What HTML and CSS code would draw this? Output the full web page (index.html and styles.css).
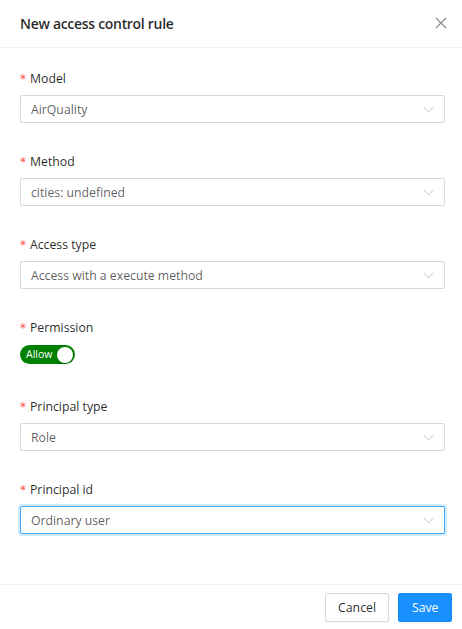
FILE: index.html
```html
<!DOCTYPE html>
<html>
<head>
<meta charset="utf-8">
<link rel="stylesheet" href="styles.css">
</head>
<body>
<div class="modal">
  <div class="header">
    <div class="title">New access control rule</div>
    <svg class="close" width="12" height="12" viewBox="0 0 12 12"><path d="M1 1L11 11M11 1L1 11" stroke="#8c8c8c" stroke-width="1.2" fill="none"/></svg>
  </div>
  <div class="body">
    <div class="item">
      <div class="label"><span class="req">*</span>Model</div>
      <div class="select"><span>AirQuality</span><svg class="arrow" width="11" height="7" viewBox="0 0 11 7"><path d="M0.5 0.8L5.5 5.8L10.5 0.8" stroke="#bfbfbf" stroke-width="1" fill="none"/></svg></div>
    </div>
    <div class="item">
      <div class="label"><span class="req">*</span>Method</div>
      <div class="select"><span>cities: undefined</span><svg class="arrow" width="11" height="7" viewBox="0 0 11 7"><path d="M0.5 0.8L5.5 5.8L10.5 0.8" stroke="#bfbfbf" stroke-width="1" fill="none"/></svg></div>
    </div>
    <div class="item">
      <div class="label"><span class="req">*</span>Access type</div>
      <div class="select"><span>Access with a execute method</span><svg class="arrow" width="11" height="7" viewBox="0 0 11 7"><path d="M0.5 0.8L5.5 5.8L10.5 0.8" stroke="#bfbfbf" stroke-width="1" fill="none"/></svg></div>
    </div>
    <div class="item item-switch">
      <div class="label"><span class="req">*</span>Permission</div>
      <div class="switch-row"><div class="switch"><span class="switch-text">Allow</span><span class="knob"></span></div></div>
    </div>
    <div class="item">
      <div class="label"><span class="req">*</span>Principal type</div>
      <div class="select"><span>Role</span><svg class="arrow" width="11" height="7" viewBox="0 0 11 7"><path d="M0.5 0.8L5.5 5.8L10.5 0.8" stroke="#bfbfbf" stroke-width="1" fill="none"/></svg></div>
    </div>
    <div class="item">
      <div class="label"><span class="req">*</span>Principal id</div>
      <div class="select focused"><span>Ordinary user</span><svg class="arrow" width="11" height="7" viewBox="0 0 11 7"><path d="M0.5 0.8L5.5 5.8L10.5 0.8" stroke="#bfbfbf" stroke-width="1" fill="none"/></svg></div>
    </div>
  </div>
  <div class="footer">
    <button class="btn">Cancel</button>
    <button class="btn primary">Save</button>
  </div>
</div>
</body>
</html>
```
FILE: styles.css
```css
* { box-sizing: border-box; }
html, body { margin: 0; padding: 0; background: #fff; }
body {
  font-family: "Open Sans", "Noto Sans", sans-serif;
  font-size: 12.25px;
  color: rgba(0,0,0,0.85);
  width: 462px;
  height: 629px;
  overflow: hidden;
}
.modal { width: 462px; height: 629px; display: flex; flex-direction: column; }
.header {
  height: 48px;
  border-bottom: 1px solid #f0f0f0;
  display: flex;
  align-items: center;
  justify-content: space-between;
  padding: 0 15px 1px 20px;
}
.title { font-size: 14px; font-weight: 600; color: rgba(0,0,0,0.85); letter-spacing: -0.3px; }
.close { display: block; }
.body { padding: 21px 17px 0 20px; flex: 1; }
.item { margin-bottom: 29px; }
.label {
  height: 26px;
  padding-bottom: 7px;
  line-height: 19px;
  display: flex;
  align-items: center;
  color: rgba(0,0,0,0.85);
}
.req { color: #ff4d4f; margin-right: 4px; font-family: SimSun, "DejaVu Sans", sans-serif; font-size: 12px; line-height: 1; }
.select {
  height: 28px;
  border: 1px solid #d9d9d9;
  border-radius: 2px;
  display: flex;
  align-items: center;
  justify-content: space-between;
  padding: 0 10px 0 10px;
  color: rgba(0,0,0,0.65);
}
.select.focused {
  border-color: #40a9ff;
  box-shadow: 0 0 0 2px rgba(24,144,255,0.2);
}
.arrow { display: block; }
.item-switch { margin-bottom: 29px; }
.switch-row { height: 24px; display: flex; align-items: flex-start; }
.switch {
  width: 55px;
  height: 19px;
  border-radius: 10px;
  background: #008000;
  display: flex;
  align-items: center;
  justify-content: space-between;
  padding: 0 2px 0 6px;
  margin-top: 1px;
}
.switch-text { color: #fff; font-size: 10.5px; line-height: 1; }
.knob { width: 16px; height: 16px; border-radius: 50%; background: #fff; box-shadow: 0 1px 2px rgba(0,35,11,0.2); }
.footer {
  border-top: 1px solid #f0f0f0;
  height: 45px;
  display: flex;
  justify-content: flex-end;
  align-items: flex-start;
  padding: 8px 10px 0 0;
  gap: 9px;
}
.btn {
  height: 29px;
  padding: 0 12.5px;
  font-family: inherit;
  font-size: 12.25px;
  border: 1px solid #d9d9d9;
  border-radius: 2px;
  background: #fff;
  color: rgba(0,0,0,0.85);
  box-shadow: 0 2px 0 rgba(0,0,0,0.015);
}
.btn.primary { background: #1890ff; border-color: #1890ff; color: #fff; }
```
